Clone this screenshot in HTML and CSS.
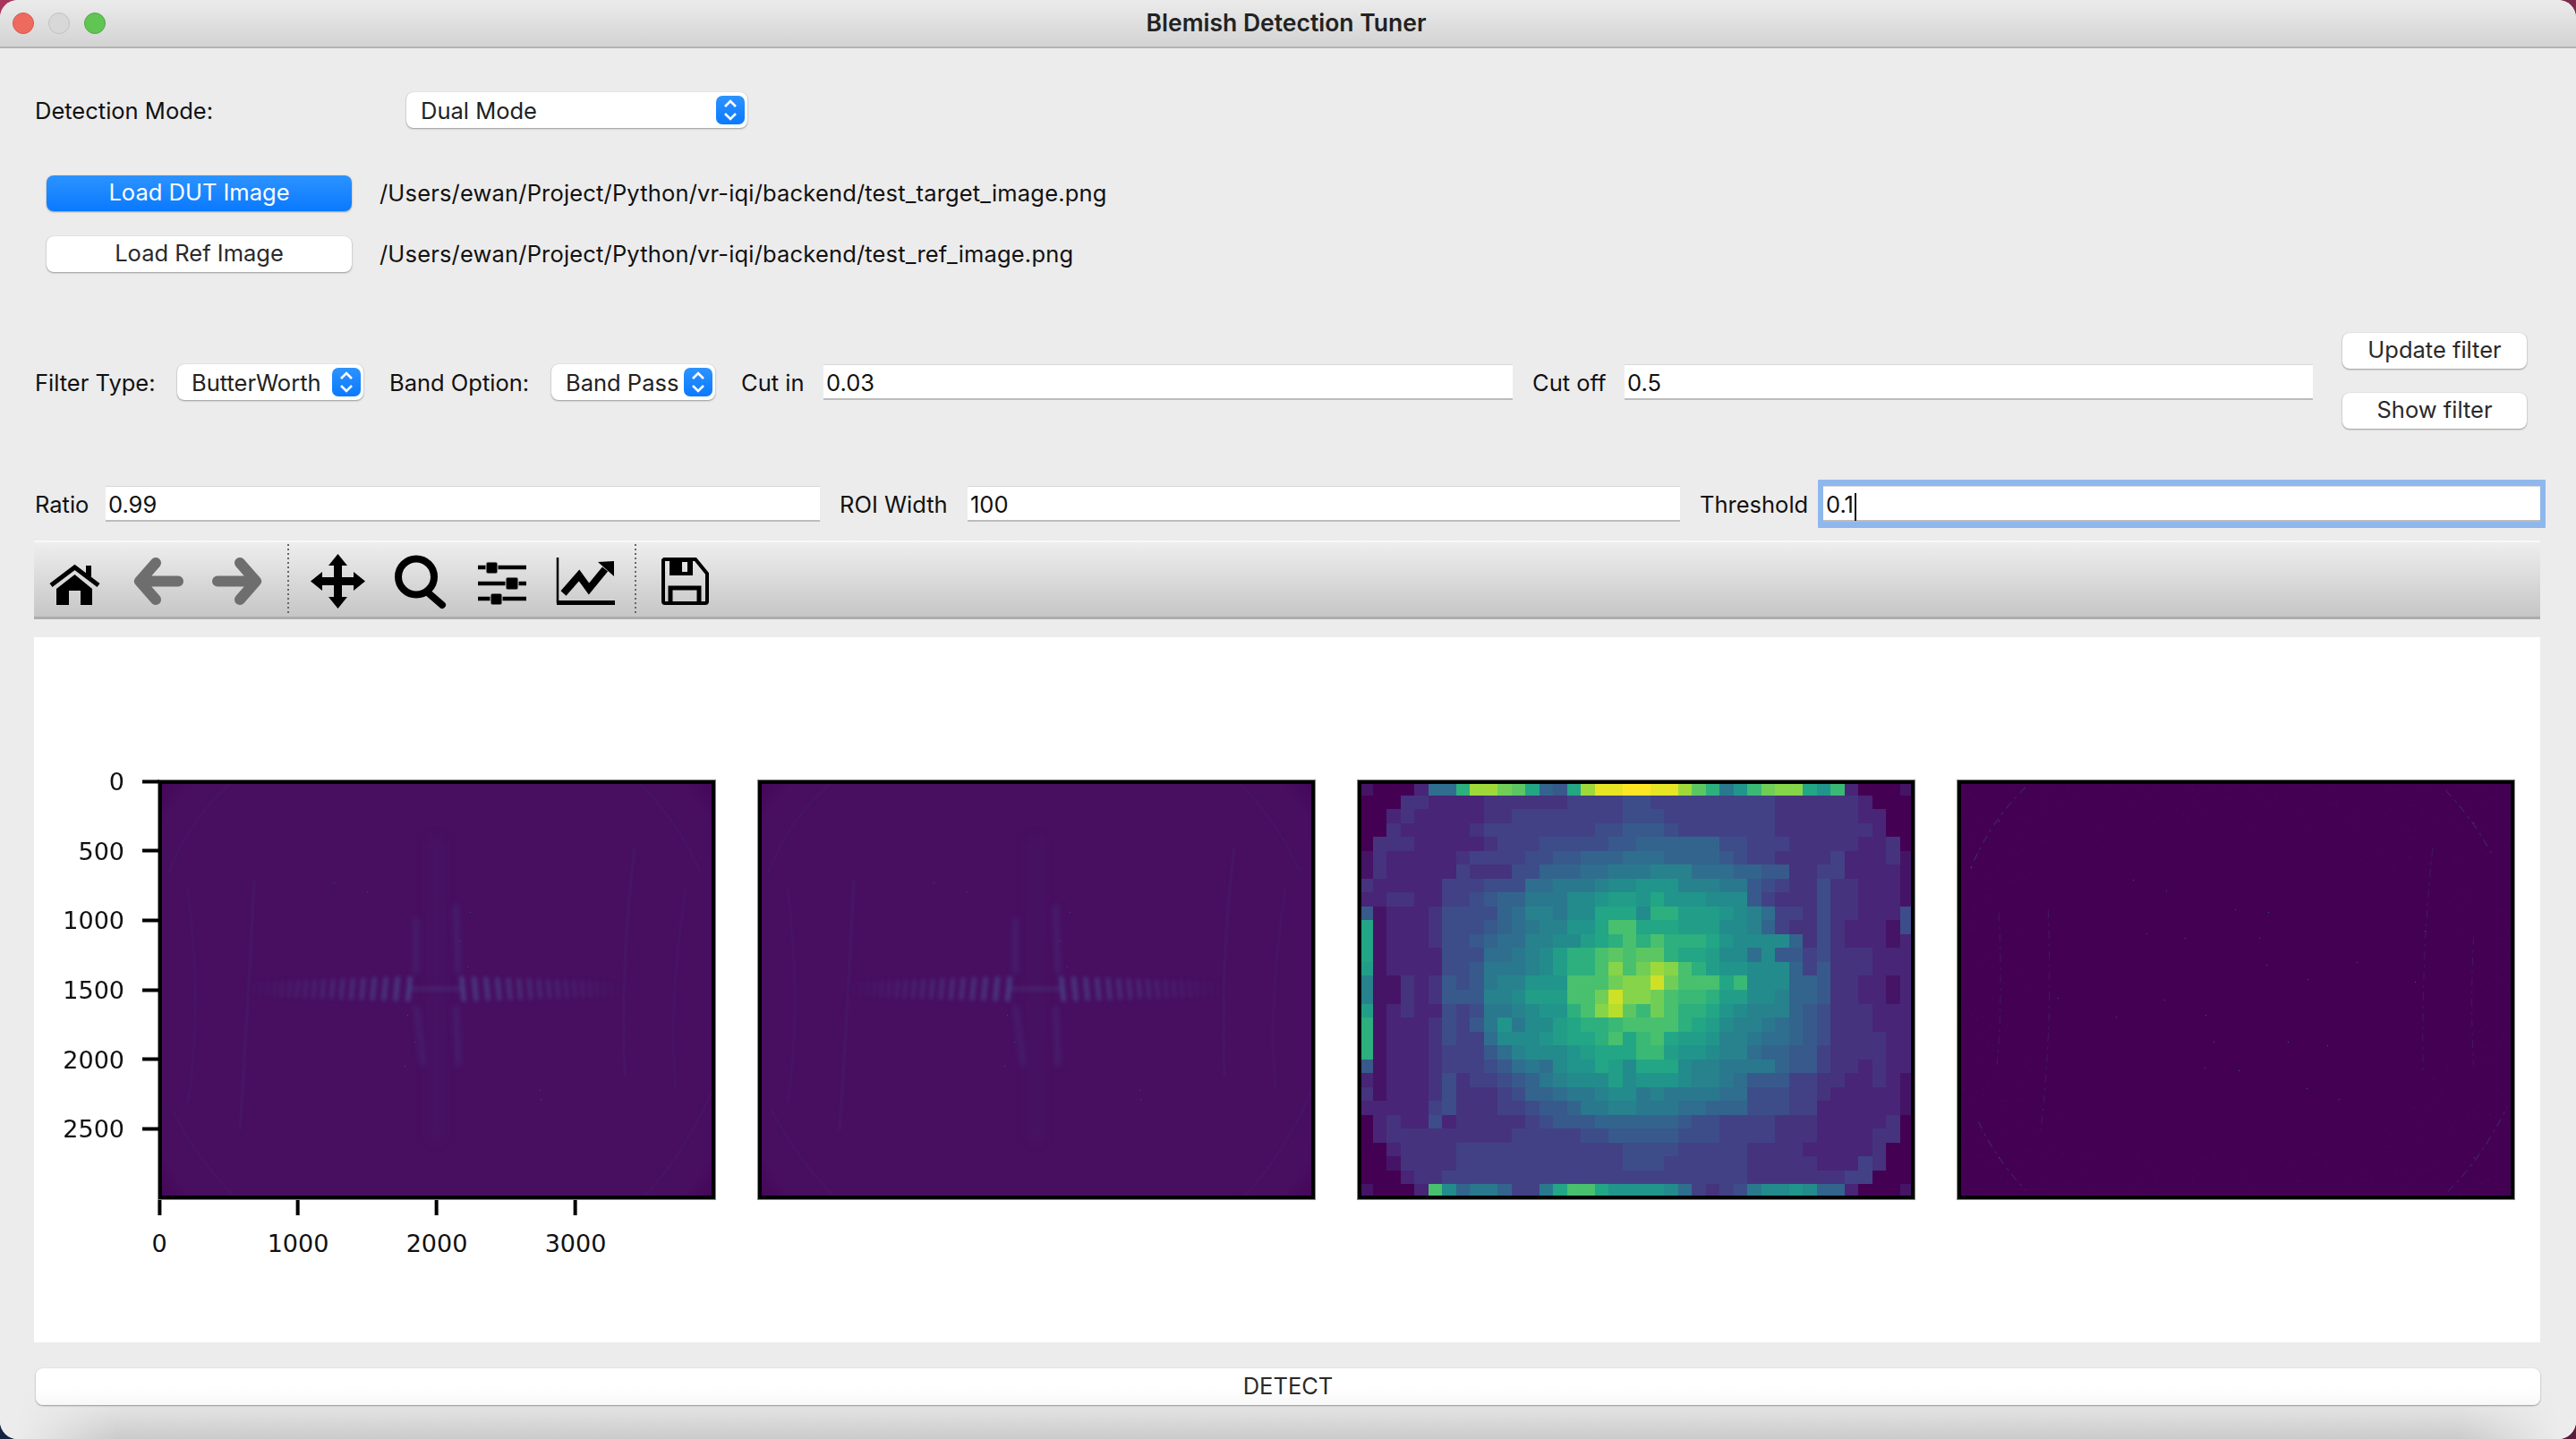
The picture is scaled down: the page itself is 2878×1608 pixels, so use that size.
FILE: index.html
```html
<!DOCTYPE html>
<html lang="en">
<head>
    <meta charset="UTF-8">
    <meta name="viewport" content="width=device-width, initial-scale=1.0">
    <title>Blemish Detection Tuner</title>
    <link rel="stylesheet" href="styles.css">
</head>
<body>
    <div class="window">
        <div class="titlebar">
            <div class="lights">
                <span class="light red"></span>
                <span class="light grey"></span>
                <span class="light green"></span>
            </div>
            <div class="title">Blemish Detection Tuner</div>
        </div>

        <div class="content">
            <div class="mode-row">
                <label class="mode-label">Detection Mode:</label>
                <div class="select mode-select">
                    <span>Dual Mode</span>
                    <svg class="stepper" viewBox="0 0 32 32"><path d="M10 12l6-6 6 6M10 20l6 6 6-6"/></svg>
                </div>
            </div>

            <div class="load-row first">
                <button class="btn primary load-btn">Load DUT Image</button>
                <span class="path">/Users/ewan/Project/Python/vr-iqi/backend/test_target_image.png</span>
            </div>
            <div class="load-row">
                <button class="btn load-btn">Load Ref Image</button>
                <span class="path">/Users/ewan/Project/Python/vr-iqi/backend/test_ref_image.png</span>
            </div>

            <div class="filter-row">
                <label>Filter Type:</label>
                <div class="select">
                    <span>ButterWorth</span>
                    <svg class="stepper" viewBox="0 0 32 32"><path d="M10 12l6-6 6 6M10 20l6 6 6-6"/></svg>
                </div>
                <label class="pad">Band Option:</label>
                <div class="select">
                    <span>Band Pass</span>
                    <svg class="stepper" viewBox="0 0 32 32"><path d="M10 12l6-6 6 6M10 20l6 6 6-6"/></svg>
                </div>
                <label class="pad">Cut in</label>
                <div class="field">0.03</div>
                <label class="pad-sm">Cut off</label>
                <div class="field">0.5</div>
                <div class="filter-btns">
                    <button class="btn">Update filter</button>
                    <button class="btn">Show filter</button>
                </div>
            </div>

            <div class="param-row">
                <label>Ratio</label>
                <div class="field">0.99</div>
                <label class="pad-sm">ROI Width</label>
                <div class="field">100</div>
                <label class="pad-sm">Threshold</label>
                <div class="field focused">0.1<span class="caret"></span></div>
            </div>

            <div class="toolbar">
                <div class="tool">
                    <svg viewBox="0 0 64 64">
                        <path class="line" d="M6 38L32.5 18 59 38" stroke-width="5"/>
                        <rect x="45" y="16" width="6" height="14"/>
                        <path d="M12 42L32.5 26 52 42V60H39V44H26V60H12Z"/>
                    </svg>
                </div>
                <div class="tool off">
                    <svg viewBox="0 0 64 64">
                        <path class="line" d="M31 13L13 33.5 31 54M13 33.5H56" stroke-width="12" stroke-linecap="round" stroke-linejoin="round"/>
                    </svg>
                </div>
                <div class="tool off">
                    <svg viewBox="0 0 64 64">
                        <path class="line" d="M33 13L51 33.5 33 54M51 33.5H8" stroke-width="12" stroke-linecap="round" stroke-linejoin="round"/>
                    </svg>
                </div>
                <div class="sep"></div>
                <div class="tool">
                    <svg viewBox="0 0 64 64">
                        <rect x="28" y="10" width="9" height="47"/>
                        <rect x="9" y="29" width="47" height="9"/>
                        <path d="M32.5 3L43 16H22ZM32.5 64L43 51H22ZM2 33.5L15 23V44ZM63 33.5L50 23V44Z"/>
                    </svg>
                </div>
                <div class="tool">
                    <svg viewBox="0 0 64 64">
                        <circle class="line" cx="28" cy="28.5" r="20" stroke-width="8"/>
                        <path class="line" d="M42 47L57 60" stroke-width="8" stroke-linecap="round"/>
                    </svg>
                </div>
                <div class="tool">
                    <svg viewBox="0 0 64 64">
                        <path class="line" d="M5 18H59M5 36H59M5 53H59" stroke-width="4.5"/>
                        <rect class="knob" x="14" y="12" width="13" height="13" rx="2"/>
                        <rect class="knob" x="36" y="29" width="14" height="14" rx="2"/>
                        <rect class="knob" x="19" y="47" width="13" height="13" rx="2"/>
                    </svg>
                </div>
                <div class="tool">
                    <svg viewBox="0 0 64 64">
                        <path class="line" d="M2 7V58" stroke-width="2.5"/>
                        <path class="line" d="M1 57.5H66" stroke-width="5"/>
                        <path class="line" d="M8.5 47L26 27 37 42 55 20" stroke-width="8"/>
                        <path d="M65 11L47 12 65 28Z"/>
                    </svg>
                </div>
                <div class="sep last"></div>
                <div class="tool">
                    <svg viewBox="0 0 64 64">
                        <path class="line" d="M9 9H44L57 25V56Q57 58 55 58H10Q8 58 8 56V10Z" stroke-width="4"/>
                        <path d="M15 9H41V27H15ZM29 12V23H35V12Z" fill-rule="evenodd"/>
                        <path class="line" d="M16 58V41H48V58" stroke-width="5"/>
                    </svg>
                </div>
            </div>

            <div class="figure">
                <div class="plot">
                    <canvas id="dutPlot" width="614" height="460"></canvas>
                    <div class="axis-y">
                        <div class="ytick" style="top:0%"><span>0</span><i></i></div>
                        <div class="ytick" style="top:16.667%"><span>500</span><i></i></div>
                        <div class="ytick" style="top:33.333%"><span>1000</span><i></i></div>
                        <div class="ytick" style="top:50%"><span>1500</span><i></i></div>
                        <div class="ytick" style="top:66.667%"><span>2000</span><i></i></div>
                        <div class="ytick" style="top:83.333%"><span>2500</span><i></i></div>
                    </div>
                    <div class="axis-x">
                        <div class="xtick" style="left:0%"><i></i><span>0</span></div>
                        <div class="xtick" style="left:25%"><i></i><span>1000</span></div>
                        <div class="xtick" style="left:50%"><i></i><span>2000</span></div>
                        <div class="xtick" style="left:75%"><i></i><span>3000</span></div>
                    </div>
                </div>
                <div class="plot"><canvas id="refPlot" width="614" height="460"></canvas></div>
                <div class="plot"><canvas id="heatPlot" width="614" height="460"></canvas></div>
                <div class="plot"><canvas id="diffPlot" width="614" height="460"></canvas></div>
            </div>
        </div>

        <div class="footer">
            <button class="btn detect">DETECT</button>
        </div>
    </div>
    <script src="plots.js"></script>
</body>
</html>
```

FILE: styles.css
```css
* {
    box-sizing: border-box;
}
html, body {
    margin: 0;
    height: 100%;
}
body {
    background:
        linear-gradient(to right, #a8345a, #7a2a4c) top / 100% 50% no-repeat,
        linear-gradient(to right, #14233f, #5a1a3a) bottom / 100% 50% no-repeat;
    color: #111;
    font-family: Inter, "Liberation Sans", sans-serif;
    font-size: 25.5px;
}
.window {
    width: 2878px;
    height: 1608px;
    background-color: #ececec;
    border-radius: 20px;
    overflow: hidden;
}

/* title bar */
.titlebar {
    display: grid;
    grid-template-columns: 1fr auto 1fr;
    align-items: center;
    height: 54px;
    background: linear-gradient(#ebebeb, #d3d3d3);
    border-bottom: 2px solid #b3b3b3;
}
.lights {
    display: flex;
    gap: 16px;
    padding-left: 14px;
}
.light {
    width: 24px;
    height: 24px;
    border-radius: 50%;
    border: 1px solid;
}
.red {
    background-color: #ee6a5f;
    border-color: #d8564c;
}
.grey {
    background-color: #d8d8d8;
    border-color: #c0c0c0;
}
.green {
    background-color: #61c554;
    border-color: #4fa842;
}
.title {
    margin: 0 4px 2px 0;
    font-size: 26.5px;
    font-weight: 600;
    color: #222;
}

.content {
    padding: 0 40px 0 38px;
}
label {
    padding-top: 1px;
    white-space: nowrap;
}

/* controls */
.btn {
    height: 40px;
    padding: 0 0 3px;
    border: none;
    border-radius: 8px;
    background-color: #fff;
    box-shadow: 0 1px 2px rgba(0, 0, 0, .35), 0 0 1px rgba(0, 0, 0, .2);
    color: #2a2a2a;
    font: inherit;
}
.primary {
    background: linear-gradient(#2c93ff, #0a79ff);
    color: #fff;
}
.select {
    display: flex;
    align-items: center;
    justify-content: space-between;
    height: 40px;
    padding: 0 3px 0 16px;
    background-color: #fff;
    border-radius: 8px;
    box-shadow: 0 1px 2px rgba(0, 0, 0, .35), 0 0 1px rgba(0, 0, 0, .2);
    color: #222;
}
.stepper {
    width: 32px;
    height: 32px;
    flex: none;
    border-radius: 7px;
    background: linear-gradient(#2c93ff, #0a79ff);
}
.stepper path {
    fill: none;
    stroke: #fff;
    stroke-width: 2.6;
}
.path {
    margin-bottom: 2px;
    letter-spacing: .17px;
}
.field {
    height: 40px;
    padding: 0 3px;
    line-height: 40px;
    background-color: #fff;
    border-top: 1px solid #d8d8d8;
    border-bottom: 2px solid #bcbcbc;
    white-space: nowrap;
}
.focused {
    box-shadow: 0 -7px 0 0 #8fb7ec, 0 7px 0 0 #8fb7ec, -6px 0 0 0 #8fb7ec, 6px 0 0 0 #8fb7ec, -6px -7px 0 0 #8fb7ec, 6px 7px 0 0 #8fb7ec, 6px -7px 0 0 #8fb7ec, -6px 7px 0 0 #8fb7ec;
    border-radius: 1px;
}
.caret {
    display: inline-block;
    width: 2px;
    height: 31px;
    margin-left: 1px;
    background-color: #111;
    vertical-align: middle;
}

/* rows */
.mode-row {
    display: grid;
    grid-template-columns: 416px 381px;
    align-items: center;
    margin-top: 49px;
}
.mode-label {
    padding-left: 1px;
}
.load-row {
    display: flex;
    align-items: center;
    gap: 31px;
    margin-top: 28px;
    padding-left: 14px;
}
.load-row.first {
    margin-top: 53px;
}
.load-btn {
    width: 341px;
}
.filter-row {
    display: grid;
    grid-template-columns: 160px 208px 210px 183px 121px 770px 125px 769px 33px 206px;
    align-items: center;
    height: 110px;
    margin-top: 68px;
    padding-left: 0;
}
.filter-row > label:first-child,
.param-row > label:first-child {
    padding-left: 1px;
}
.pad {
    padding-left: 29px;
}
.pad-sm {
    padding-left: 22px;
}
.filter-btns {
    grid-column: 10;
    align-self: start;
    display: flex;
    flex-direction: column;
    gap: 27px;
}
.param-row {
    display: grid;
    grid-template-columns: 80px 798px 165px 796px 160px 801px;
    align-items: center;
    margin-top: 61px;
}

/* matplotlib toolbar */
.toolbar {
    display: flex;
    align-items: center;
    gap: 2px;
    height: 88px;
    margin-top: 21px;
    background: linear-gradient(#eeeeee, #c6c6c6);
    border-top: 2px solid #f8f8f8;
    border-bottom: 3px solid #adadad;
}
.tool {
    display: flex;
    justify-content: center;
    width: 90px;
}
.tool svg {
    width: 64px;
    height: 64px;
    overflow: visible;
}
.line {
    fill: none;
    stroke: #000;
}
.knob {
    stroke: #d4d4d4;
    stroke-width: 1;
}
.off .line {
    stroke: #6e6e6e;
}
.sep {
    width: 2px;
    height: 80px;
    margin: 0 7px;
    background: repeating-linear-gradient(#666 0 2px, transparent 2px 5px);
}
.sep.last {
    margin-left: 9px;
}

/* figure */
.figure {
    display: flex;
    align-items: flex-start;
    gap: 46px;
    height: 788px;
    margin-top: 20px;
    padding: 159px 0 0 138px;
    background-color: #fff;
}
.plot {
    position: relative;
    width: 624px;
    height: 470px;
    border: 5px solid #000;
    outline: 1px solid #888;
    outline-offset: -1px;
}
.plot canvas {
    display: block;
}
.axis-y {
    position: absolute;
    left: -3px;
    top: -3px;
    width: 0;
    height: 466px;
    font-family: "DejaVu Sans", sans-serif;
    font-size: 27px;
}
.ytick {
    position: absolute;
    right: 0;
    display: flex;
    align-items: center;
    gap: 20px;
    transform: translateY(-50%);
}
.ytick i {
    width: 19px;
    height: 4px;
    background-color: #000;
}
.axis-x {
    position: absolute;
    left: -3px;
    top: 465px;
    width: 620px;
    font-family: "DejaVu Sans", sans-serif;
    font-size: 27px;
    line-height: 36px;
}
.xtick {
    position: absolute;
    top: 0;
    display: flex;
    flex-direction: column;
    align-items: center;
    transform: translateX(-50%);
}
.xtick i {
    width: 4px;
    height: 17px;
    margin-bottom: 14px;
    background-color: #000;
}

/* bottom */
.footer {
    height: 108px;
    padding: 29px 40px 0;
    background:
        linear-gradient(to right, #ececec 20px, rgba(236, 236, 236, 0) 130px, rgba(236, 236, 236, 0) calc(100% - 130px), #ececec calc(100% - 20px)),
        linear-gradient(#ececec 45%, #e4e4e4 66%, #cbcbcb);
}
.detect {
    display: block;
    width: 100%;
    height: 41px;
    background: linear-gradient(#fff 50%, #f8f8f8);
}
```

FILE: plots.js
```js
const VIRIDIS = [[68, 1, 84], [72, 36, 117], [65, 68, 135], [53, 95, 141], [42, 120, 142], [33, 145, 140],
    [34, 168, 132], [68, 191, 112], [122, 209, 81], [189, 223, 38], [253, 231, 37]];

// block mean of the difference image, a = 0 ... z = 1
const HEAT = [
    "baaaciipvvtsohgovyyzzyyvspjmqtuuomqcaaab",
    "aaaddccccddddddeeeeffeeeeeeeeeddddddcaaa",
    "aacdcccccddeeeeeeeefffeeeeeeeeddddddccaa",
    "aadcccccdeeeeeeeeffgggfeeeeeeedddddddcaa",
    "adddcccccdeeefffffgghhhhhhffeeedddddccda",
    "bdcccccdeeeeffgghhhiiihhhhgfeeddddecccdb",
    "bdcccccedddffhhhiijjjkkkiiihhggddeeccccb",
    "dccccceeefffiijjjkllmmmkkkjjgfeddfddcccb",
    "ccddcceefghhjjjllmnnmommmlllgedddfddcccb",
    "gbcccdffffhikkjllooolppnnnmlkieedfddcccf",
    "obcccdfffghijkkmmorrooonnnllkheddfdcccbf",
    "obcccdffghiikkllnoprprpppomllllhdfdcccbc",
    "obccccfffiijklnpprsrsspoonllilggefdddccc",
    "nbccccffgjjjklnpprurtvurpnmmlllhegdddccc",
    "kbbdcdgfgjkkmmmrrrtuuxtrrroqlllhhgddccbc",
    "kbbdcdgggkklnnnrrtxuutrqqpnnllkhhgddccbc",
    "nbcdccfefjjklmmpruwsqtrppomlkkkhgfdddccc",
    "pbcccdfegjmjllnoppqrrrrponlkkjihgfdddccc",
    "pbcccdfeeilllmnooproqronnmkkjiihgfddddcc",
    "pbcccdeeegiklllmnoooqqnmmlkkihhggeddddcc",
    "gbcccdeeefgijilmmonlooolkkjjjjhggeddcdcc",
    "cbcccdfdeefghjklllnlmmmlkkjigggeeddccdcb",
    "dbcccdfdddefhhijjklljkjjjjiifffeedcccccb",
    "cccccefdddeefgghjjkkjjjiihhhfffeeccccccb",
    "acdccfcdddddefggghhhhhhgffeeeedddcccccda",
    "acdddddddddeeeeeffgggggfffeeeedddccccdda",
    "aacddddeeeeeeeeeeeeffffeeeeeddddcccccdaa",
    "aabddddeeeeeeeeeeeefffeeeeeedddddcccedaa",
    "aaacddeeeeeeeeeeeeeeeeeeeeeedddddddeeaaa",
    "baaacrlhjjheejorrommmmliedefjllmlhhcaaab"
];

function viridis(t) {
    const p = Math.min(Math.max(t, 0), 1) * 10;
    const i = Math.min(Math.floor(p), 9);
    const f = p - i;
    const c = VIRIDIS[i].map((v, k) => Math.round(v + (VIRIDIS[i + 1][k] - v) * f));
    return `rgb(${c[0]},${c[1]},${c[2]})`;
}

function curve(ctx, x0, y0, cx, cy, x1, y1) {
    ctx.beginPath();
    ctx.moveTo(x0, y0);
    ctx.quadraticCurveTo(cx, cy, x1, y1);
    ctx.stroke();
}

function drawSpectrum(id) {
    const ctx = document.getElementById(id).getContext("2d");
    const w = 614, h = 460;
    const glow = ctx.createRadialGradient(w / 2, h / 2, 260, w / 2, h / 2, 390);
    glow.addColorStop(0, "#480f60");
    glow.addColorStop(0.75, "#480e5f");
    glow.addColorStop(1, "#440558");
    ctx.fillStyle = glow;
    ctx.fillRect(0, 0, w, h);

    // curved ghosts
    ctx.filter = "blur(1px)";
    ctx.strokeStyle = "rgba(70, 70, 140, .2)";
    ctx.lineWidth = 2;
    curve(ctx, 103, 107, 96, 250, 87, 387);
    curve(ctx, 528, 71, 512, 200, 517, 327);
    ctx.strokeStyle = "rgba(70, 70, 140, .16)";
    curve(ctx, 29, 117, 45, 250, 29, 357);
    curve(ctx, 585, 117, 565, 250, 574, 341);
    curve(ctx, 76, 0, 30, 40, 7, 100);
    curve(ctx, 534, 0, 575, 40, 601, 97);
    curve(ctx, 11, 364, 40, 420, 81, 461);
    curve(ctx, 538, 461, 580, 420, 614, 344);

    // vertical streaks of the cross
    ctx.filter = "blur(3px)";
    ctx.lineWidth = 5;
    ctx.strokeStyle = "rgba(65, 85, 150, .28)";
    [[284, 150, 284, 212], [328, 135, 331, 212], [284, 248, 292, 315], [328, 248, 331, 315]].forEach(s => {
        ctx.beginPath();
        ctx.moveTo(s[0], s[1]);
        ctx.lineTo(s[2], s[3]);
        ctx.stroke();
    });
    ctx.filter = "blur(8px)";
    ctx.lineWidth = 14;
    ctx.strokeStyle = "rgba(65, 85, 150, .06)";
    ctx.beginPath();
    ctx.moveTo(306, 60);
    ctx.lineTo(306, 400);
    ctx.stroke();

    // horizontal fringes, fading and tightening away from the centre
    ctx.filter = "blur(2.2px)";
    [-1, 1].forEach(side => {
        let d = 30;
        while (d < 205) {
            const k = 1 - d / 212;
            ctx.fillStyle = `rgba(75, 100, 160, ${0.62 * k})`;
            const half = 8 + 7 * k;
            ctx.save();
            ctx.translate(306 + side * d, 229);
            ctx.rotate(side * -0.1);
            ctx.fillRect(-2.5, -half, 5, half * 2);
            ctx.restore();
            d += 15 - d * 0.04;
        }
    });
    ctx.fillStyle = "rgba(70, 95, 155, .18)";
    ctx.fillRect(276, 226, 60, 6);
    ctx.filter = "none";

    // specks
    ctx.fillStyle = "rgba(60, 110, 150, .6)";
    [[192, 110], [229, 120], [344, 143], [332, 175], [341, 204], [274, 258], [282, 288], [271, 315], [422, 342], [423, 352]].forEach(p => {
        ctx.fillRect(p[0], p[1], 1, 1);
    });
}

function drawHeatmap(id) {
    const ctx = document.getElementById(id).getContext("2d");
    const cw = 620 / 40, ch = 466 / 30;
    HEAT.forEach((row, j) => {
        for (let i = 0; i < 40; i++) {
            const x0 = Math.round(i * cw) - 3, x1 = Math.round((i + 1) * cw) - 3;
            const y0 = Math.round(j * ch) - 3, y1 = Math.round((j + 1) * ch) - 3;
            ctx.fillStyle = viridis(Math.pow((row.charCodeAt(i) - 97) / 25, 0.9));
            ctx.fillRect(x0, y0, x1 - x0, y1 - y0);
        }
    });
}

function drawDiff(id) {
    const ctx = document.getElementById(id).getContext("2d");
    const w = 614, h = 460;
    const sx = v => v / 2.184 - 31;
    const sy = v => v / 3 - 16;
    ctx.fillStyle = "#440154";
    ctx.fillRect(0, 0, w, h);

    // faint noise around the edge of the lens, fixed seed
    let seed = 7;
    const rnd = () => (seed = (seed * 16807) % 2147483647) / 2147483647;
    for (let n = 0; n < 2600; n++) {
        const x = rnd() * w, y = rnd() * h;
        const e = Math.hypot((x - w / 2) / (w / 2), (y - h / 2) / (h / 2));
        if (e > 0.72 + rnd() * 0.2) {
            ctx.fillStyle = `rgba(70, 50, 130, ${0.15 + rnd() * 0.25})`;
            ctx.fillRect(x, y, 1, 1);
        }
    }

    ctx.lineWidth = 1;
    ctx.setLineDash([9, 6, 3, 5]);
    ctx.strokeStyle = "rgba(60, 90, 150, .5)";
    [[225, 60, 140, 170, 90, 335], [1250, 70, 1320, 170, 1365, 290], [110, 1180, 150, 1300, 225, 1410], [1255, 1415, 1340, 1300, 1400, 1130]].forEach(a => {
        curve(ctx, sx(a[0]), sy(a[1]), sx(a[2]), sy(a[3]), sx(a[4]), sy(a[5]));
    });
    ctx.strokeStyle = "rgba(60, 70, 140, .35)";
    [[280, 470, 292, 850, 262, 1210], [160, 480, 170, 760, 155, 1000], [1218, 265, 1190, 640, 1195, 1020], [1318, 560, 1310, 780, 1318, 990]].forEach(a => {
        curve(ctx, sx(a[0]), sy(a[1]), sx(a[2]), sy(a[3]), sx(a[4]), sy(a[5]));
    });
    ctx.setLineDash([]);

    // isolated hot pixels
    ctx.fillStyle = "rgba(55, 120, 150, .7)";
    [[488, 370], [568, 406], [817, 477], [795, 563], [614, 563], [519, 550], [813, 655], [1032, 645], [913, 703],
        [303, 766], [564, 772], [665, 821], [446, 829], [683, 912], [864, 913], [960, 925], [661, 998], [744, 1008],
        [910, 1069], [990, 1105], [1175, 710], [1200, 540], [735, 468], [160, 172], [1318, 176], [160, 1298], [1320, 1300], [92, 328]].forEach(p => {
        ctx.fillRect(Math.round(sx(p[0])), Math.round(sy(p[1])), 1, 1);
    });
}

drawSpectrum("dutPlot");
drawSpectrum("refPlot");
drawHeatmap("heatPlot");
drawDiff("diffPlot");
```
